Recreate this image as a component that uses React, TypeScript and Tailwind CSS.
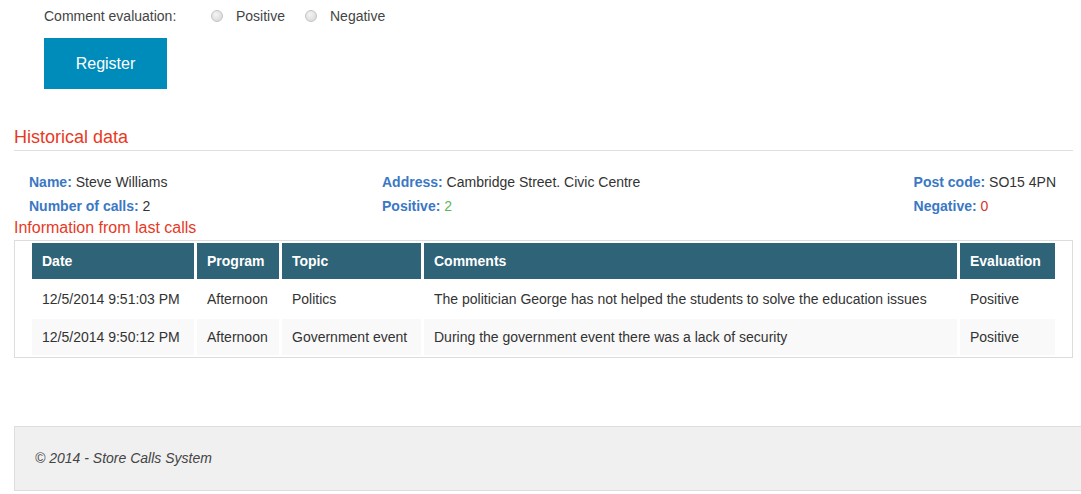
const calls = [
  {
    date: '12/5/2014 9:51:03 PM',
    program: 'Afternoon',
    topic: 'Politics',
    comments: 'The politician George has not helped the students to solve the education issues',
    evaluation: 'Positive',
  },
  {
    date: '12/5/2014 9:50:12 PM',
    program: 'Afternoon',
    topic: 'Government event',
    comments: 'During the government event there was a lack of security',
    evaluation: 'Positive',
  },
];

const Radio = () => (
  <span className="inline-block w-[12px] h-[12px] rounded-full border border-[#c4c4c4] bg-[radial-gradient(circle_at_40%_35%,#f4f4f4,#d4d4d4)]"></span>
);

const App = () => {
  return (
    <div className="w-[1081px] h-[494px] overflow-hidden bg-white text-[#333] text-[14px] font-['Liberation_Sans',Arial,sans-serif]">
      <div className="pl-[44px] pt-[6px]">
        <div className="flex items-center h-[20px]">
          <span className="text-[#444] w-[167px]">Comment evaluation:</span>
          <Radio />
          <span className="ml-[13px] w-[69px] text-[#444]">Positive</span>
          <Radio />
          <span className="ml-[13px] text-[#444]">Negative</span>
        </div>
        <button className="mt-[12px] w-[123px] h-[51px] bg-[#008cba] text-white text-[16px]">Register</button>
      </div>

      <div className="mx-[14px] w-[1059px]">
        <h2 className="mt-[38px] text-[18px] leading-[20px] text-[#e8391f]">Historical data</h2>
        <div className="mt-[3px] h-px bg-[#dedede]"></div>

        <div className="mt-[19px] grid grid-cols-3 leading-[24px]">
          <div className="px-[15px]">
            <div><span className="font-bold text-[#3a78c4]">Name:</span> Steve Williams</div>
            <div><span className="font-bold text-[#3a78c4]">Number of calls:</span> 2</div>
          </div>
          <div className="px-[15px]">
            <div><span className="font-bold text-[#3a78c4]">Address:</span> Cambridge Street. Civic Centre</div>
            <div><span className="font-bold text-[#3a78c4]">Positive:</span> <span className="text-[#5cb85c]">2</span></div>
          </div>
          <div className="pr-[17px] flex justify-end">
            <div>
              <div><span className="font-bold text-[#3a78c4]">Post code:</span> SO15 4PN</div>
              <div><span className="font-bold text-[#3a78c4]">Negative:</span> <span className="text-[#d9342b]">0</span></div>
            </div>
          </div>
        </div>

        <h3 className="text-[16px] leading-[20px] text-[#e8391f]">Information from last calls</h3>

        <div className="mt-[2px] border border-[#dddddd] px-[14px]">
          <table className="table-fixed w-[1029px] border-separate border-spacing-x-[3px] border-spacing-y-[2px]">
            <thead>
              <tr className="h-[36px] bg-[#2e6378] text-white text-left">
                <th className="w-[162px] px-[10px] font-bold">Date</th>
                <th className="w-[82px] px-[10px] font-bold">Program</th>
                <th className="w-[139px] px-[10px] font-bold">Topic</th>
                <th className="w-[533px] px-[10px] font-bold">Comments</th>
                <th className="w-[95px] px-[10px] font-bold">Evaluation</th>
              </tr>
            </thead>
            <tbody>
              {calls.map((c, i) => (
                <tr key={i} className={i % 2 === 1 ? 'h-[36px] bg-[#f9f9f9]' : 'h-[36px]'}>
                  <td className="px-[10px] whitespace-nowrap">{c.date}</td>
                  <td className="px-[10px] whitespace-nowrap">{c.program}</td>
                  <td className="px-[10px] whitespace-nowrap">{c.topic}</td>
                  <td className="px-[10px] whitespace-nowrap">{c.comments}</td>
                  <td className="px-[10px] whitespace-nowrap">{c.evaluation}</td>
                </tr>
              ))}
            </tbody>
          </table>
        </div>
      </div>

      <footer className="mt-[68px] ml-[14px] h-[65px] border-y border-l border-[#dddddd] bg-[#f0f0f0] pl-[20px] flex items-center">
        <p className="italic text-[#444]">© 2014 - Store Calls System</p>
      </footer>
    </div>
  );
};

export default App;
